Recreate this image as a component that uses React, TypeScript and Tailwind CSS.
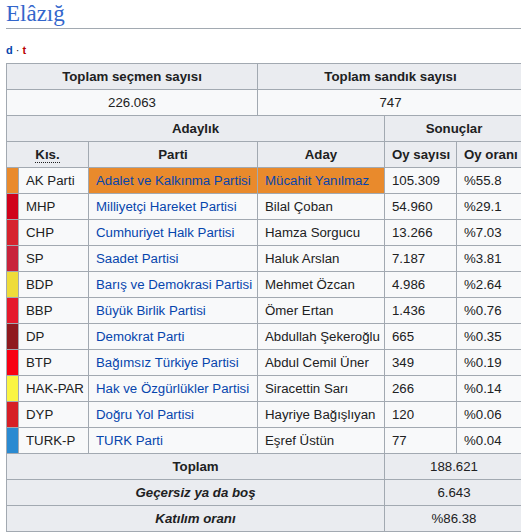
import React from "react";

type Row = {
  color: string;
  kis: string;
  parti: string;
  aday: string;
  adayLink?: boolean;
  oy: string;
  oran: string;
  winner?: boolean;
};

const ROWS: Row[] = [
  { color: "#e98a2c", kis: "AK Parti", parti: "Adalet ve Kalkınma Partisi", aday: "Mücahit Yanılmaz", adayLink: true, oy: "105.309", oran: "%55.8", winner: true },
  { color: "#d0021b", kis: "MHP", parti: "Milliyetçi Hareket Partisi", aday: "Bilal Çoban", oy: "54.960", oran: "%29.1" },
  { color: "#d6232e", kis: "CHP", parti: "Cumhuriyet Halk Partisi", aday: "Hamza Sorgucu", oy: "13.266", oran: "%7.03" },
  { color: "#c8233c", kis: "SP", parti: "Saadet Partisi", aday: "Haluk Arslan", oy: "7.187", oran: "%3.81" },
  { color: "#efdc3a", kis: "BDP", parti: "Barış ve Demokrasi Partisi", aday: "Mehmet Özcan", oy: "4.986", oran: "%2.64" },
  { color: "#e51a2c", kis: "BBP", parti: "Büyük Birlik Partisi", aday: "Ömer Ertan", oy: "1.436", oran: "%0.76" },
  { color: "#8f1a1f", kis: "DP", parti: "Demokrat Parti", aday: "Abdullah Şekeroğlu", oy: "665", oran: "%0.35" },
  { color: "#f80012", kis: "BTP", parti: "Bağımsız Türkiye Partisi", aday: "Abdul Cemil Üner", oy: "349", oran: "%0.19" },
  { color: "#fbf542", kis: "HAK-PAR", parti: "Hak ve Özgürlükler Partisi", aday: "Siracettin Sarı", oy: "266", oran: "%0.14" },
  { color: "#d61f26", kis: "DYP", parti: "Doğru Yol Partisi", aday: "Hayriye Bağışlıyan", oy: "120", oran: "%0.06" },
  { color: "#2a8ad1", kis: "TURK-P", parti: "TURK Parti", aday: "Eşref Üstün", oy: "77", oran: "%0.04" },
];

// ortak hücre sınıfları
const cell = "border border-[#a2a9b1] px-[7px] py-[3px] leading-[19px] whitespace-nowrap overflow-hidden";
const th = `${cell} bg-[#eaecf0] font-bold text-center`;
const td = `${cell} bg-[#f8f9fa]`;

export default function App() {
  return (
    <div
      className="w-[521px] h-[532px] overflow-hidden bg-white text-[#202122]"
      style={{ fontFamily: '"Liberation Sans", Arial, sans-serif' }}
    >
      <div className="pl-[6px]">
        {/* Başlık */}
        <h2
          className="h-[29px] border-b border-[#a2a9b1] text-[23px] leading-[28px] text-[#3366cc]"
          style={{ fontFamily: '"Liberation Serif", "Times New Roman", serif' }}
        >
          Elâzığ
        </h2>

        <div className="mt-[14px] h-[14px] text-[11px] leading-[14px] font-bold">
          <span className="text-[#0645ad]">d</span>
          <span className="px-[3px] font-normal">·</span>
          <span className="text-[#ba0000]">t</span>
        </div>

        <table className="mt-[6px] w-[517px] table-fixed border-collapse text-[13.25px]">
          <colgroup>
            <col className="w-[12px]" />
            <col className="w-[70px]" />
            <col className="w-[169px]" />
            <col className="w-[127px]" />
            <col className="w-[72px]" />
            <col className="w-[67px]" />
          </colgroup>
          <tbody>
            <tr>
              <th colSpan={3} className={th}>Toplam seçmen sayısı</th>
              <th colSpan={3} className={th}>Toplam sandık sayısı</th>
            </tr>
            <tr>
              <td colSpan={3} className={`${td} text-center`}>226.063</td>
              <td colSpan={3} className={`${td} text-center`}>747</td>
            </tr>
            <tr>
              <th colSpan={4} className={th}>Adaylık</th>
              <th colSpan={2} className={th}>Sonuçlar</th>
            </tr>
            <tr>
              <th colSpan={2} className={th}>
                <abbr className="no-underline border-b border-dotted border-[#202122]">Kıs.</abbr>
              </th>
              <th className={th}>Parti</th>
              <th className={th}>Aday</th>
              <th className={th}>Oy sayısı</th>
              <th className={th}>Oy oranı</th>
            </tr>

            {ROWS.map((r) => (
              <tr key={r.kis}>
                <td className="border border-[#a2a9b1] p-0" style={{ backgroundColor: r.color }} />
                <td className={td}>{r.kis}</td>
                <td className={`${td} text-[#0645ad]`} style={r.winner ? { backgroundColor: "#e98a2c" } : undefined}>
                  {r.parti}
                </td>
                <td
                  className={`${td} ${r.adayLink ? "text-[#0645ad]" : ""}`}
                  style={r.winner ? { backgroundColor: "#e98a2c" } : undefined}
                >
                  {r.aday}
                </td>
                <td className={td}>{r.oy}</td>
                <td className={td}>{r.oran}</td>
              </tr>
            ))}

            <tr>
              <th colSpan={4} className={th}>Toplam</th>
              <td colSpan={2} className={`${cell} bg-[#eaecf0] text-center`}>188.621</td>
            </tr>
            <tr>
              <th colSpan={4} className={`${th} italic`}>Geçersiz ya da boş</th>
              <td colSpan={2} className={`${cell} bg-[#eaecf0] text-center`}>6.643</td>
            </tr>
            <tr>
              <th colSpan={4} className={`${th} italic`}>Katılım oranı</th>
              <td colSpan={2} className={`${cell} bg-[#eaecf0] text-center`}>%86.38</td>
            </tr>
          </tbody>
        </table>
      </div>
    </div>
  );
}
